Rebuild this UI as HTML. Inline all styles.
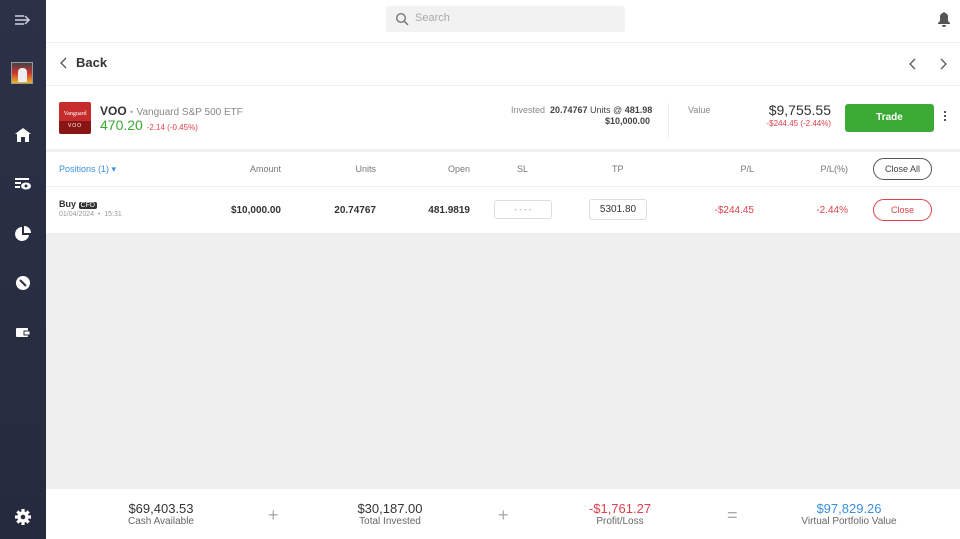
<!DOCTYPE html>
<html><head><style>
*{box-sizing:border-box;margin:0;padding:0}
body{width:960px;height:539px;overflow:hidden;font-family:"Liberation Sans",sans-serif;background:#fff;position:relative;color:#333}
.sb{position:absolute;left:0;top:0;width:46px;height:539px;background:linear-gradient(#2d3147,#252a3d)}
.ic{position:absolute;left:14px;width:18px;height:18px}
.abs{position:absolute}
.gray{background:#efefef}
.r{text-align:right}
.red{color:#e0414d}
</style></head><body>
<div class="sb">
<svg class="ic" style="top:11px" viewBox="0 0 18 18" fill="none" stroke="#cfd3de" stroke-width="1.5"><path d="M1 5h9M1 9h14M1 13h9M11 5l4 4-4 4"/></svg>
<div class="abs" style="left:11px;top:62px;width:22px;height:22px;background:linear-gradient(#444 0,#c33 50%,#e8b820 100%);border:1px solid #999"><div style="position:absolute;left:6px;top:5px;width:9px;height:14px;background:#eee;border-radius:4px 4px 1px 1px"></div></div>
<svg class="ic" style="top:126px" viewBox="0 0 18 18" fill="#fff"><path d="M9 2L1 8h2v8h12V8h2z"/><rect x="7" y="11" width="4" height="5" fill="#2b2f45"/></svg>
<svg class="ic" style="top:175px" viewBox="0 0 18 18" fill="#fff"><rect x="1" y="3" width="14" height="2"/><rect x="1" y="7" width="6" height="2"/><rect x="1" y="11" width="5" height="2"/><ellipse cx="12" cy="11" rx="5" ry="3.5"/><circle cx="12" cy="11" r="1.5" fill="#2b2f45"/></svg>
<svg class="ic" style="top:225px" viewBox="0 0 18 18" fill="#fff"><path d="M8 2a7 7 0 1 0 7 8H8z"/><path d="M10 1v7h7a7 7 0 0 0-7-7z"/></svg>
<svg class="ic" style="top:274px" viewBox="0 0 18 18"><circle cx="9" cy="9" r="7" fill="#fff"/><path d="M6 6l6 6" stroke="#2b2f45" stroke-width="2"/></svg>
<svg class="ic" style="top:323px" viewBox="0 0 18 18" fill="#fff"><rect x="2" y="5" width="12" height="9" rx="1"/><rect x="10" y="8" width="6" height="4" fill="#fff" stroke="#2b2f45"/></svg>
<svg class="ic" style="top:508px" viewBox="0 0 18 18" fill="#fff"><g transform="translate(9 9)"><rect x="-1.6" y="-8" width="3.2" height="16"/><rect x="-1.6" y="-8" width="3.2" height="16" transform="rotate(45)"/><rect x="-1.6" y="-8" width="3.2" height="16" transform="rotate(90)"/><rect x="-1.6" y="-8" width="3.2" height="16" transform="rotate(135)"/><circle r="5.6"/><circle r="2.3" fill="#262b3e"/></g></svg>
</div>
<div class="abs" style="left:386px;top:6px;width:239px;height:26px;background:#f2f2f2;border-radius:3px"></div>
<svg class="abs" style="left:395px;top:12px" width="14" height="14" viewBox="0 0 14 14" fill="none" stroke="#777" stroke-width="1.4"><circle cx="6" cy="6" r="4.3"/><path d="M9 9l4 4"/></svg>
<div class="abs" style="left:415px;top:12px;font-size:11px;color:#aaa">Search</div>
<svg class="abs" style="left:937px;top:11px" width="14" height="16" viewBox="0 0 14 16" fill="#555"><path d="M7 1a1 1 0 0 1 1 1 4 4 0 0 1 3 4v4l2 2v1H1v-1l2-2V6a4 4 0 0 1 3-4 1 1 0 0 1 1-1zM5 14h4a2 2 0 0 1-4 0z"/></svg>
<div class="abs" style="left:46px;top:42px;width:914px;height:1px;background:#eee"></div>
<svg class="abs" style="left:60px;top:57px" width="8" height="12" viewBox="0 0 8 12" fill="none" stroke="#555" stroke-width="1.3"><path d="M6 1L1 6l5 5"/></svg>
<div class="abs" style="left:76px;top:55px;font-size:13px;font-weight:bold;color:#333">Back</div>
<svg class="abs" style="left:909px;top:58px" width="8" height="12" viewBox="0 0 8 12" fill="none" stroke="#555" stroke-width="1.3"><path d="M6 1L1 6l5 5"/></svg>
<svg class="abs" style="left:939px;top:58px" width="8" height="12" viewBox="0 0 8 12" fill="none" stroke="#555" stroke-width="1.3"><path d="M2 1l5 5-5 5"/></svg>
<div class="abs" style="left:46px;top:85px;width:914px;height:1px;background:#eee"></div>
<div class="abs" style="left:59px;top:102px;width:32px;height:32px;background:linear-gradient(#c62c2c 60%,#8a1515 60%);border-radius:2px;color:#fff;text-align:center"><div style="font-size:6px;font-family:'Liberation Serif',serif;margin-top:9px">Vanguard</div><div style="font-size:5px;margin-top:6px;letter-spacing:1px">VOO</div></div>
<div class="abs" style="left:100px;top:104px;font-size:12px;font-weight:bold;color:#333">VOO <span style="color:#aaa;font-weight:normal;font-size:9px">•</span> <span style="font-weight:normal;font-size:10px;color:#888">Vanguard S&amp;P 500 ETF</span></div>
<div class="abs" style="left:100px;top:117px;font-size:14px;color:#3aaa35">470.20 <span class="red" style="font-size:8px">-2.14 (-0.45%)</span></div>
<div class="abs" style="left:511px;top:105px;font-size:9px;color:#888">Invested</div>
<div class="abs r" style="left:550px;top:105px;width:100px;font-size:9px;color:#444;line-height:11px;white-space:nowrap"><b>20.74767</b> Units @ <b>481.98</b><br><b>$10,000.00</b></div>
<div class="abs" style="left:668px;top:103px;width:1px;height:36px;background:#eee"></div>
<div class="abs" style="left:688px;top:105px;font-size:9px;color:#888">Value</div>
<div class="abs r" style="left:740px;top:102px;width:91px;font-size:14px;color:#333">$9,755.55</div>
<div class="abs r red" style="left:740px;top:119px;width:91px;font-size:8px">-$244.45 (-2.44%)</div>
<div class="abs" style="left:845px;top:104px;width:89px;height:28px;background:#3aaa35;border-radius:3px;color:#fff;font-size:10px;font-weight:bold;text-align:center;line-height:28px">Trade</div>
<div class="abs" style="left:944px;top:111px;width:2px;height:2px;background:#555;box-shadow:0 4px #555,0 8px #555"></div>
<div class="abs gray" style="left:46px;top:149px;width:914px;height:3px"></div>
<div class="abs" style="left:59px;top:164px;font-size:9px;color:#3d8fe0">Positions (1) ▾</div>
<div class="abs" style="top:164px;left:0;width:960px;font-size:9px;color:#777">
<span class="abs r" style="left:220px;width:61px">Amount</span>
<span class="abs r" style="left:320px;width:56px">Units</span>
<span class="abs r" style="left:410px;width:60px">Open</span>
<span class="abs" style="left:517px">SL</span>
<span class="abs" style="left:612px">TP</span>
<span class="abs r" style="left:700px;width:54px">P/L</span>
<span class="abs r" style="left:790px;width:58px">P/L(%)</span>
</div>
<div class="abs" style="left:873px;top:158px;width:59px;height:22px;border:1px solid #555;border-radius:11px;font-size:9px;text-align:center;line-height:20px;color:#444">Close All</div>
<div class="abs" style="left:46px;top:186px;width:914px;height:1px;background:#f0f0f0"></div>
<div class="abs" style="left:59px;top:199px;font-size:9px;font-weight:bold;color:#333">Buy <span style="background:#333;color:#fff;font-size:7px;padding:0 2px;border-radius:2px;font-weight:normal">CFD</span></div>
<div class="abs" style="left:59px;top:211px;font-size:7px;color:#999">01/04/2024 &nbsp;•&nbsp; 15:31</div>
<div class="abs" style="top:205px;left:0;width:960px;font-size:10px;color:#333;font-weight:bold">
<span class="abs r" style="left:200px;width:81px">$10,000.00</span>
<span class="abs r" style="left:310px;width:66px">20.74767</span>
<span class="abs r" style="left:410px;width:60px">481.9819</span>
<span class="abs r red" style="left:690px;width:64px;font-weight:normal">-$244.45</span>
<span class="abs r red" style="left:790px;width:58px;font-weight:normal">-2.44%</span>
</div>
<div class="abs" style="left:494px;top:200px;width:58px;height:19px;border:1px solid #ddd;border-radius:3px;font-size:8px;color:#999;text-align:center;line-height:17px">- - - -</div>
<div class="abs" style="left:589px;top:199px;width:58px;height:21px;border:1px solid #ddd;border-radius:3px;font-size:10px;color:#333;text-align:center;line-height:19px">5301.80</div>
<div class="abs" style="left:873px;top:199px;width:59px;height:22px;border:1px solid #e0414d;border-radius:11px;font-size:9px;text-align:center;line-height:20px;color:#e0414d">Close</div>
<div class="abs gray" style="left:46px;top:233px;width:914px;height:256px"></div>
<div class="abs" style="top:489px;left:46px;width:914px;height:50px;text-align:center">
<div class="abs" style="left:45px;top:12px;width:140px;font-size:13px;line-height:15px;color:#333">$69,403.53<div style="font-size:10px;line-height:12px;color:#666">Cash Available</div></div>
<div class="abs" style="left:222px;top:16px;font-size:18px;color:#aaa">+</div>
<div class="abs" style="left:274px;top:12px;width:140px;font-size:13px;line-height:15px;color:#333">$30,187.00<div style="font-size:10px;line-height:12px;color:#666">Total Invested</div></div>
<div class="abs" style="left:452px;top:16px;font-size:18px;color:#aaa">+</div>
<div class="abs red" style="left:504px;top:12px;width:140px;font-size:13px;line-height:15px">-$1,761.27<div style="font-size:10px;line-height:12px;color:#666">Profit/Loss</div></div>
<div class="abs" style="left:681px;top:16px;font-size:18px;color:#aaa">=</div>
<div class="abs" style="left:733px;top:12px;width:140px;font-size:13px;line-height:15px;color:#3d8fe0">$97,829.26<div style="font-size:10px;line-height:12px;color:#666">Virtual Portfolio Value</div></div>
</div>
</body></html>
